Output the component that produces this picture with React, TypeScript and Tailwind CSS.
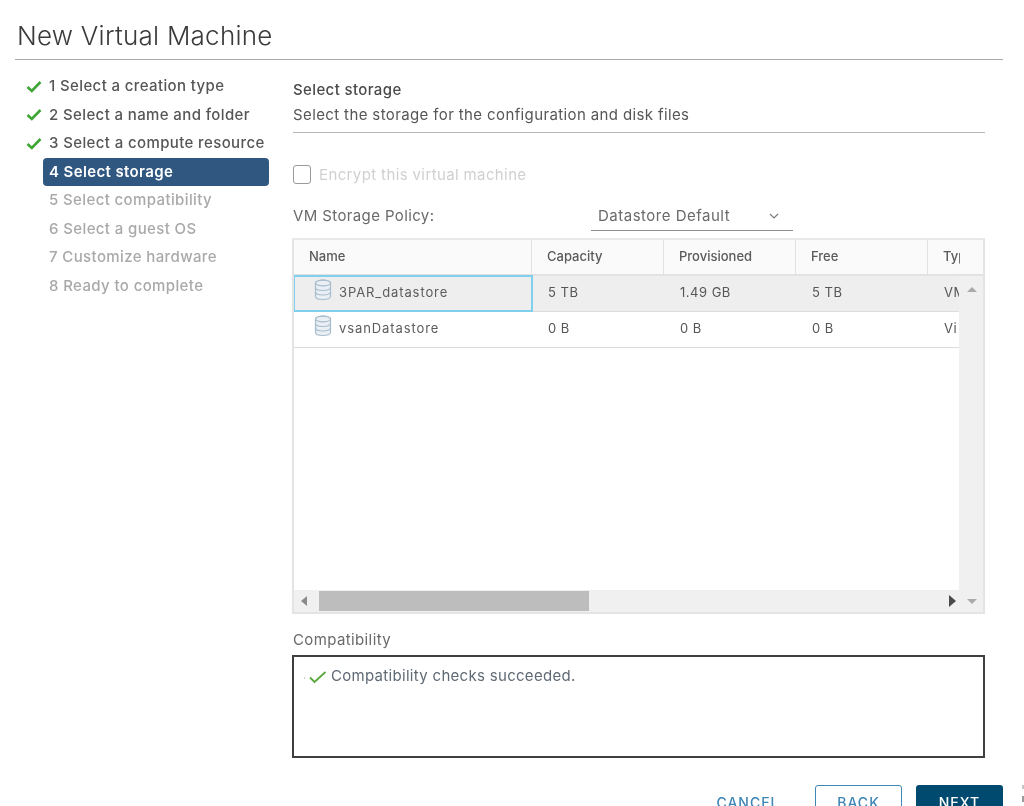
import React from "react";

function Check() {
  return (
    <svg width="16" height="13" viewBox="0 0 16 13" className="shrink-0">
      <path d="M1.5 7 L5.8 11 L14.5 2" fill="none" stroke="#3fa535" strokeWidth="2.6" />
    </svg>
  );
}

function Db() {
  return (
    <svg width="18" height="22" viewBox="0 0 18 22" className="shrink-0 -mt-[3px]">
      <g fill="none" stroke="#a9bdcc" strokeWidth="1.2">
        <ellipse cx="9" cy="4" rx="7.5" ry="2.8" fill="#e9eff4" />
        <path d="M1.5 4 V17.5 C1.5 19.4 4.8 20.5 9 20.5 C13.2 20.5 16.5 19.4 16.5 17.5 V4" fill="#e9eff4" />
        <ellipse cx="9" cy="4" rx="7.5" ry="2.8" />
        <path d="M1.5 8.6 C1.5 10.5 4.8 11.5 9 11.5 C13.2 11.5 16.5 10.5 16.5 8.6" />
        <path d="M1.5 13 C1.5 14.9 4.8 16 9 16 C13.2 16 16.5 14.9 16.5 13" />
      </g>
    </svg>
  );
}

const steps = [
  { t: "1 Select a creation type", s: "done" },
  { t: "2 Select a name and folder", s: "done" },
  { t: "3 Select a compute resource", s: "done" },
  { t: "4 Select storage", s: "active" },
  { t: "5 Select compatibility", s: "todo" },
  { t: "6 Select a guest OS", s: "todo" },
  { t: "7 Customize hardware", s: "todo" },
  { t: "8 Ready to complete", s: "todo" },
];

const colW = ["w-[238px]", "w-[132px]", "w-[132px]", "w-[132px]", "w-[58px]"];
const headers = ["Name", "Capacity", "Provisioned", "Free", "Typ"];
const rows = [
  { n: "3PAR_datastore", c: ["5 TB", "1.49 GB", "5 TB", "VM"], sel: true },
  { n: "vsanDatastore", c: ["0 B", "0 B", "0 B", "Vi"], sel: false },
];

export default function App() {
  return (
    <div className="w-[1024px] h-[806px] overflow-hidden bg-white text-[#565656] font-['Inter','Liberation_Sans',sans-serif] text-[15px] leading-[20px] tracking-[0.38px] blur-[0.3px]">
      <div className="ml-[15px] mr-[21px] h-[60px] border-b border-[#a8a8a8] pt-[18px]">
        <h1 className="pl-[2px] text-[26px] leading-[36px] font-light tracking-[0.25px] text-[#3a3a3a]">New Virtual Machine</h1>
      </div>
      <div className="flex">
        <nav className="w-[293px] shrink-0 pt-[12px] pl-[26px]">
          {steps.map((s) => (
            <div key={s.t} className="flex h-[28.5px] items-center">
              <div className="w-[17px] shrink-0">{s.s === "done" && <Check />}</div>
              {s.s === "active" ? (
                <div className="h-[28px] w-[226px] rounded-[4px] bg-[#2f5780] pl-[6px] leading-[28px] font-semibold text-white">{s.t}</div>
              ) : (
                <div className={"pl-[6px] font-medium " + (s.s === "done" ? "text-[#565656]" : "text-[#a9a9a9]")}>{s.t}</div>
              )}
            </div>
          ))}
        </nav>
        <main className="w-[692px] shrink-0">
          <div className="h-[73px] border-b border-[#b5b5b5] pt-[20px]">
            <div className="font-medium leading-[20px] text-[#4a4a4a]">Select storage</div>
            <div className="mt-[5px] leading-[20px] text-[#565656]">Select the storage for the configuration and disk files</div>
          </div>
          <div className="mt-[32px] flex h-[19px] items-center">
            <div className="h-[19px] w-[18px] rounded-[3px] border border-[#9a9a9a]" />
            <span className="ml-[8px] text-[#d0d0d0]">Encrypt this virtual machine</span>
          </div>
          <div className="mt-[20px] flex h-[28px] items-start">
            <span className="w-[298px] pt-[2px] text-[#6a6a6a]">VM Storage Policy:</span>
            <div className="flex h-[27px] w-[202px] items-start justify-between border-b border-[#8c8c8c] pl-[7px] pr-[14px] pt-[2px] text-[#6a6a6a] tracking-[0.5px]">
              <span>Datastore Default</span>
              <svg width="10" height="6" viewBox="0 0 10 6" className="mt-[7px]"><path d="M1 1 L5 5 L9 1" fill="none" stroke="#7a7a7a" strokeWidth="1.2" /></svg>
            </div>
          </div>
          <div className="relative mt-[6px] h-[376px] -ml-[1px] w-[693px] border-2 border-[#e4e4e4] border-t-[#e8e8e8] overflow-hidden text-[13px] tracking-[0.5px]">
            <div className="flex h-[36px] border-b-2 border-[#e2e2e2] bg-[#fafafa] rounded-t-[2px] font-medium text-[#5a5a5a] tracking-normal">
              {headers.map((h, i) => (
                <div key={h} className={colW[i] + " flex shrink-0 items-center pb-[3px] pl-[15px] " + (i < 4 ? "border-r border-[#e2e2e2]" : "")}>
                  {i === 4 ? <span className="block w-[17px] overflow-hidden">{h}</span> : h}
                </div>
              ))}
            </div>
            {rows.map((r) => (
              <div key={r.n} className={"flex h-[36px] border-b border-[#dcdcdc] " + (r.sel ? "bg-[#eeeeee]" : "bg-white")}>
                <div className={"w-[238px] shrink-0 flex items-center pl-[20px] gap-[7px] pb-[4px] text-[#5c5c5c] " + (r.sel ? "outline-2 -outline-offset-1 outline-[#7fd0ee]" : "")}>
                  <Db />
                  <span className="tracking-[0.9px]">{r.n}</span>
                </div>
                {r.c.map((v, i) => (
                  <div key={i} className={colW[i + 1] + " shrink-0 flex items-center pl-[16px] pb-[4px]"}>{v}</div>
                ))}
              </div>
            ))}
            <div className="absolute right-0 top-[36px] bottom-0 w-[24px] bg-[#f0f0f0] flex flex-col items-center pt-[11px]">
              <div className="ml-[1px] h-0 w-0 border-x-[5px] border-b-[5px] border-x-transparent border-b-[#aaaaaa]" />
            </div>
            <div className="absolute left-0 right-0 bottom-0 h-[22px] bg-[#f0f0f0] flex items-center">
              <div className="ml-[7px] h-0 w-0 border-y-[5px] border-r-[6px] border-y-transparent border-r-[#8a8a8a]" />
              <div className="ml-[12px] h-[20px] w-[270px] bg-[#bdbdbd]" />
              <div className="ml-auto mr-[11px] h-0 w-0 border-y-[6px] border-l-[7px] border-y-transparent border-l-[#4a4a4a]" />
              <div className="mr-[6px] h-0 w-0 border-x-[5px] border-t-[5px] border-x-transparent border-t-[#aaaaaa]" />
            </div>
          </div>
          <div className="mt-[16px] leading-[20px] text-[#6a6a6a]">Compatibility</div>
          <div className="mt-[5px] -ml-[1px] h-[103px] w-[693px] border-2 border-[#3f3f3f] pl-[9px] pt-[9px] flex items-start gap-[4px] text-[#5f6a75] tracking-[0.3px]">
            <svg width="24" height="14" viewBox="0 0 24 14" className="mt-[4px] shrink-0">
              <circle cx="1.5" cy="8" r="0.7" fill="#b9b9b9" />
              <path d="M7 7.5 L11.5 12 L22.5 2" fill="none" stroke="#5aa83c" strokeWidth="1.8" />
            </svg>
            <span>Compatibility checks succeeded.</span>
          </div>
          <div className="relative mt-[27px] -ml-[293px] flex w-[1003px] justify-end gap-[14px] text-[14px] font-medium tracking-[1px]">
            <div className="mr-[10px] flex h-[36px] w-[86px] items-center justify-center text-[#3f86b5]">CANCEL</div>
            <div className="flex h-[36px] w-[87px] items-center justify-center rounded-[3px] border border-[#3f86b5] text-[#3f86b5]">BACK</div>
            <div className="flex h-[36px] w-[87px] items-center justify-center rounded-[3px] bg-[#004a70] text-white">NEXT</div>
            <div className="absolute left-[1022px] top-[0px] h-[4px] w-[2px] bg-[#c4c4c4]" />
            <div className="absolute left-[1022px] top-[11px] h-[6px] w-[2px] bg-[#9a9a9a]" />
          </div>
        </main>
      </div>
    </div>
  );
}
